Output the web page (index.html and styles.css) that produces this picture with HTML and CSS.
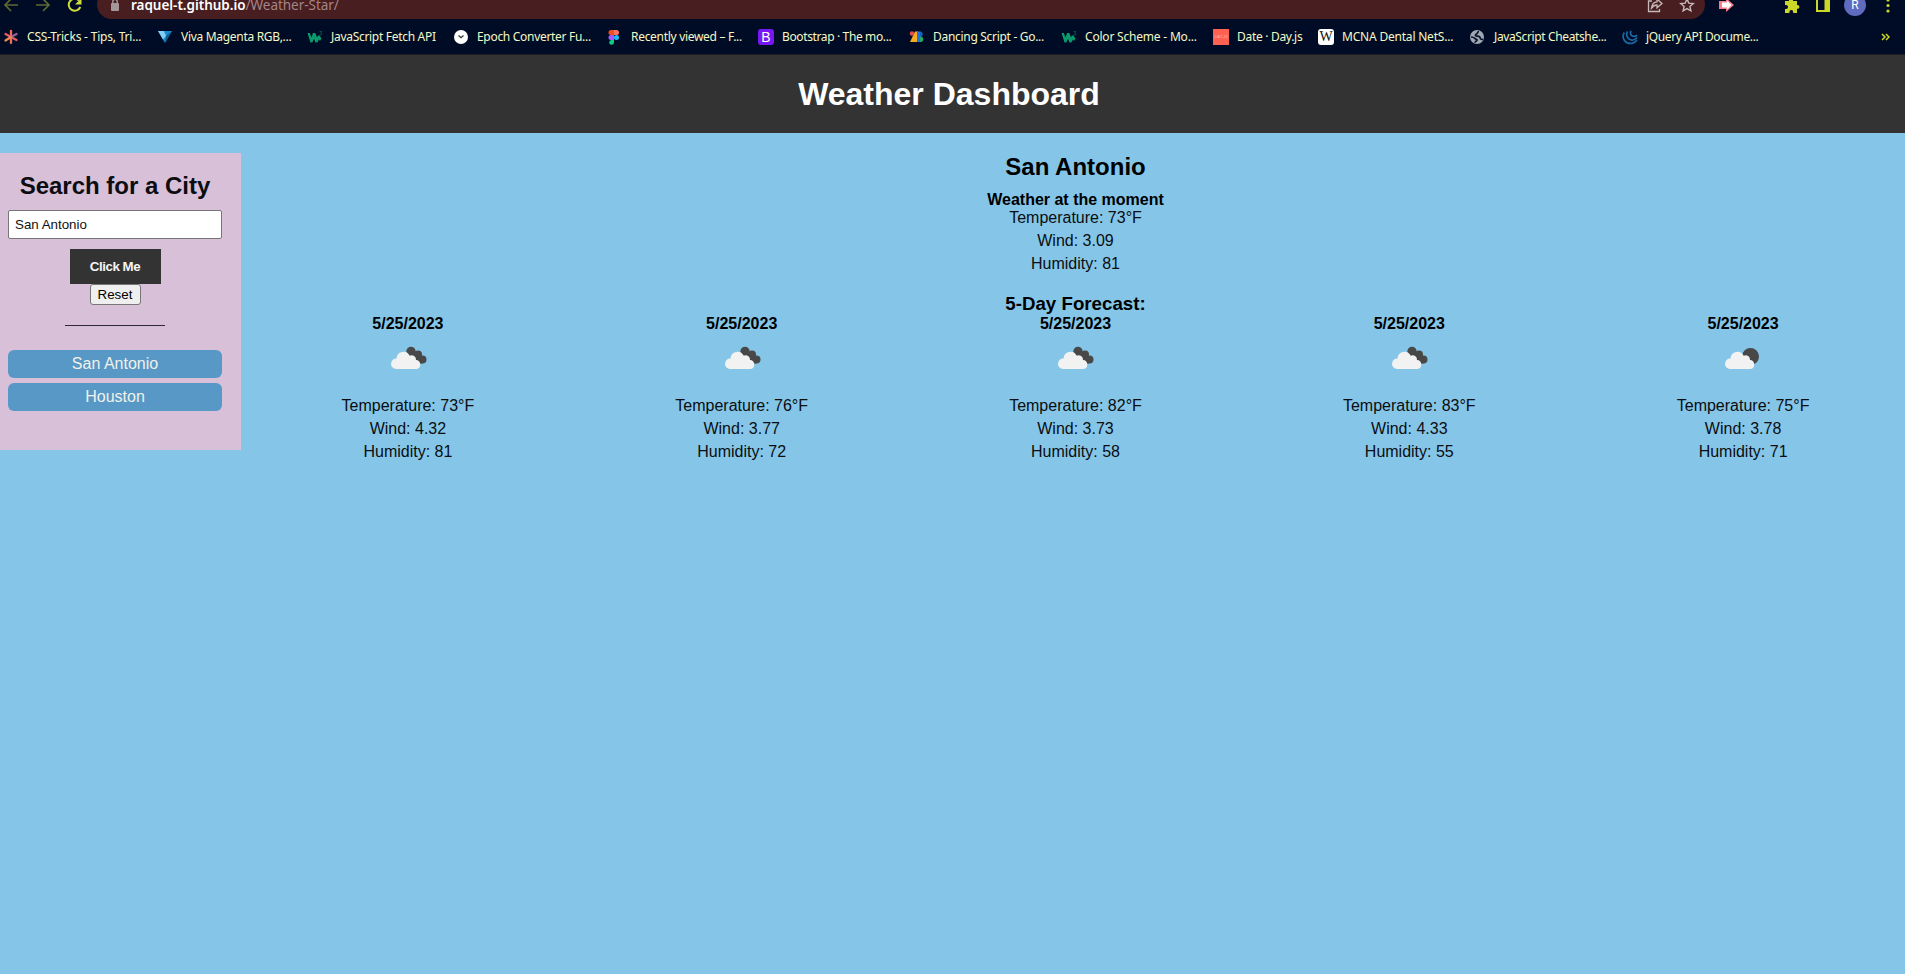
FILE: index.html
```html
<!DOCTYPE html>
<html lang="en">
<head>
<meta charset="utf-8">
<title>Weather Dashboard</title>
<link rel="stylesheet" href="styles.css">
</head>
<body>
<svg class="defs" width="0" height="0">
  <symbol id="w3" viewBox="0 0 16 16"><path d="M.5 4h2.300l1.700 4.500L6 4h2.300l1.700 4.500L11 6.500h1.500l2 3-1.500 2.500-1-1.500-1.700 3H8.500L7 9.800 5.300 13.500H3.500z" fill="#0b9a6d"/><path d="M12.500 2.500h2.300l-1.200 1.500q1.600.2 1.200 1.500-.5.800-2.300.3" fill="none" stroke="#07584a" stroke-width=".9"/></symbol>
  <symbol id="broken" viewBox="0 0 50 50"><g fill="#484848"><circle cx="28" cy="18.300" r="4.600"/><circle cx="35" cy="21.500" r="4"/><circle cx="39.500" cy="26.500" r="4"/><path d="M26 19l9 2 4.500 9.400H34z"/></g><use href="#cloud"/></symbol>
  <symbol id="moon" viewBox="0 0 50 50"><circle cx="32.500" cy="23.500" r="8.500" fill="#484848"/><use href="#cloud" x="-1"/></symbol>
  <symbol id="cloud" viewBox="0 0 50 50"><path d="M13 36a5.200 5.200 0 0 1 .6-10.500 6.800 6.800 0 0 1 13-2.700 4.300 4.300 0 0 1 6.400 4.300 4.500 4.500 0 0 1 .6 8.900z" fill="#f2f2f2"/></symbol>
</svg>

<div class="browser">
  <div class="toolbar">
    <svg class="tool back" viewBox="0 0 16 16" width="16" height="16"><path d="M15 8H2M8 2L2 8l6 6" fill="none" stroke="#5d6931" stroke-width="1.700"/></svg>
    <svg class="tool forward" viewBox="0 0 16 16" width="16" height="16"><path d="M1 8h13M8 2l6 6-6 6" fill="none" stroke="#5d6931" stroke-width="1.700"/></svg>
    <svg class="tool reload" viewBox="0 0 16 16" width="16" height="16"><path d="M13.300 10A6 6 0 1 1 12 3.500" fill="none" stroke="#d0de3a" stroke-width="2"/><path d="M14.500 1v6.500H8z" fill="#d0de3a"/></svg>
    <div class="address">
      <svg viewBox="0 0 10 14" width="10" height="14"><rect x="1" y="5" width="8" height="8" rx="1" fill="#a5989b"/><path d="M2.800 5V3.500a2.200 2.200 0 0 1 4.400 0V5" fill="none" stroke="#a5989b" stroke-width="1.400"/></svg>
      <span class="url"><b>raquel-t.github.io</b>/Weather-Star/</span>
      <svg class="share" viewBox="0 0 16 16" width="16" height="16"><path d="M5 4H1.500v10.500h11V12M4.500 11c.5-4 2.500-6 5.500-6.200V2l5 4.500-5 4.300V8c-2.300 0-4 1-5.500 3z" fill="none" stroke="#c5b9ba" stroke-width="1.300"/></svg>
      <svg class="star" viewBox="0 0 16 16" width="16" height="16"><path d="M8 2l1.800 4.100 4.500.4-3.400 3 1 4.400L8 11.600l-3.900 2.300 1-4.400-3.400-3 4.500-.4z" fill="none" stroke="#c5b9ba" stroke-width="1.400"/></svg>
    </div>
    <svg class="arrow" viewBox="0 0 17 16" width="17" height="16"><path d="M1 4h7V1l8 7-8 7v-3H1z" fill="#f17e88"/><path d="M4 5.500h5V3.500L13.500 8 9 12.500v-2H4z" fill="#fff"/></svg>
    <svg class="puzzle" viewBox="0 0 16 16" width="16" height="16"><path d="M1 4h4V3a2 2 0 0 1 4 0v1h4v4h.5a1.900 1.900 0 0 1 0 3.800H13V16H9.200v-1a1.900 1.900 0 0 0-3.800 0v1H1v-4h1a2 2 0 0 0 0-4H1z" fill="#cbd829"/></svg>
    <svg class="panel" viewBox="0 0 14 14" width="14" height="14"><path d="M1 1h12v12H1z" fill="none" stroke="#cbd829" stroke-width="2"/><path d="M8.500 0H14v14H8.500z" fill="#cbd829"/></svg>
    <span class="avatar">R</span>
    <svg class="dots" viewBox="0 0 4 16" width="4" height="16"><g fill="#cbd829"><circle cx="2" cy="3" r="1.600"/><circle cx="2" cy="8.500" r="1.600"/><circle cx="2" cy="14" r="1.600"/></g></svg>
  </div>
  <div class="bookmarks">
    <div class="bookmark wide"><svg viewBox="0 0 16 16"><g stroke-width="2.300" stroke-linecap="round"><path d="M8 2v12" stroke="#ef6b54"/><path d="M2.500 5l11 6" stroke="#e65b65"/><path d="M13.500 5L8 8" stroke="#8c6596"/><path d="M8 8l-5.500 3.500" stroke="#ee8a50"/></g></svg><span>CSS-Tricks - Tips, Tri...</span></div>
    <div class="bookmark"><svg viewBox="0 0 16 16"><path d="M1 2h14L8 14z" fill="#168bd0"/><path d="M1 2h6l2 5-3 3.500z" fill="#7fd0f4"/><path d="M15 2L8 14l1-7z" fill="#155b90"/></svg><span>Viva Magenta RGB,...</span></div>
    <div class="bookmark"><svg><use href="#w3"/></svg><span>JavaScript Fetch API</span></div>
    <div class="bookmark"><svg viewBox="0 0 16 16"><circle cx="8" cy="8" r="7" fill="#fff"/><path d="M5.500 6.500L8 8.700l2.500-2.200" fill="none" stroke="#333" stroke-width="1.300"/></svg><span>Epoch Converter Fu...</span></div>
    <div class="bookmark"><svg viewBox="0 0 16 16"><g transform="translate(-1)"><path d="M7 1H5a2.500 2.500 0 0 0 0 5h3V1z" fill="#f24e1e"/><path d="M8 1h2.500a2.500 2.500 0 0 1 0 5H8z" fill="#ff7262"/><path d="M8 6H5a2.400 2.400 0 0 0 0 5h3z" fill="#a259ff"/><circle cx="10.500" cy="8.500" r="2.500" fill="#1abcfe"/><path d="M8 11H5.500A2.400 2.400 0 1 0 8 13.500z" fill="#0acf83"/></g></svg><span>Recently viewed – F...</span></div>
    <div class="bookmark tight"><span class="tile bootstrap">B</span><span>Bootstrap · The mo...</span></div>
    <div class="bookmark"><svg viewBox="0 0 16 16"><path d="M6 2.500h3V13H1z" fill="#f9ab20"/><circle cx="3" cy="4.500" r="2.300" fill="#e34b45"/><path d="M8 2.500h3.500V13H8z" fill="#1972e8"/><path d="M11 2.500a2.700 2.700 0 0 1 0 5.400z" fill="#1760c0"/><path d="M11 7.500a2.700 2.700 0 0 1 1 5.500h-1z" fill="#2aa665"/></svg><span>Dancing Script - Go...</span></div>
    <div class="bookmark wide"><svg><use href="#w3"/></svg><span>Color Scheme - Mo...</span></div>
    <div class="bookmark"><span class="tile dayjs">DAY.JS</span><span>Date · Day.js</span></div>
    <div class="bookmark wide"><span class="tile wiki">W</span><span>MCNA Dental NetS...</span></div>
    <div class="bookmark tight"><svg viewBox="0 0 16 16"><circle cx="7" cy="8" r="7" fill="#a2a7b5"/><path d="M9 2.500C7 2.500 8 4.700 6.500 5S5 7 7 7.200s3.200.3 3.200 1.800S12 10.500 13 10.200M1 8c2 0 3 .2 4 1.500s2.300.5 2 1.700-2 1-2 2.500" fill="none" stroke="#07122b" stroke-width="1.700"/></svg><span>JavaScript Cheatshe...</span></div>
    <div class="bookmark tight"><svg viewBox="0 0 16 16"><path d="M2.300 3.500C-1 9 3.500 15.500 10 14.300q3-.6 5-3.300M5.500 2.500C3 7 7 12 11 11q2.500-.5 4-2.500M9 1.800c-1.500 3 .5 5.700 3 5.600 1.600 0 2.500-.8 3-1.500" fill="none" stroke="#1769a5" stroke-width="1.700"/></svg><span>jQuery API Docume...</span></div>
    <svg class="more" viewBox="0 0 9 8" width="9" height="8"><path d="M1 1l3 3-3 3M5 1l3 3-3 3" fill="none" stroke="#cbd829" stroke-width="1.500"/></svg>
  </div>
</div>

<header class="header"><h1>Weather Dashboard</h1></header>

<div class="layout">
  <aside class="sidebar">
    <h2>Search for a City</h2>
    <input class="city" type="text" value="San Antonio">
    <button class="search">Click Me</button>
    <button class="reset">Reset</button>
    <hr>
    <button class="history">San Antonio</button>
    <button class="history">Houston</button>
  </aside>
  <main class="weather">
    <h2>San Antonio</h2>
    <h4 class="moment">Weather at the moment</h4>
    <p>Temperature: 73°F</p><p>Wind: 3.09</p><p>Humidity: 81</p>
    <h3>5-Day Forecast:</h3>
    <div class="forecast">
      <section><h4>5/25/2023</h4><svg><use href="#broken"/></svg><p>Temperature: 73°F</p><p>Wind: 4.32</p><p>Humidity: 81</p></section>
      <section><h4>5/25/2023</h4><svg><use href="#broken"/></svg><p>Temperature: 76°F</p><p>Wind: 3.77</p><p>Humidity: 72</p></section>
      <section><h4>5/25/2023</h4><svg><use href="#broken"/></svg><p>Temperature: 82°F</p><p>Wind: 3.73</p><p>Humidity: 58</p></section>
      <section><h4>5/25/2023</h4><svg><use href="#broken"/></svg><p>Temperature: 83°F</p><p>Wind: 4.33</p><p>Humidity: 55</p></section>
      <section><h4>5/25/2023</h4><svg><use href="#moon"/></svg><p>Temperature: 75°F</p><p>Wind: 3.78</p><p>Humidity: 71</p></section>
    </div>
  </main>
</div>
</body>
</html>
```
FILE: styles.css
```css
* { box-sizing: border-box; }
body {
  margin: 0;
  height: 974px;
  overflow: hidden;
  background: #85c6e8;
  color: #0b0d10;
  font-family: "Liberation Sans", Arial, sans-serif;
  font-size: 16px;
}
h1, h2, h3, h4, p { margin: 0; }
.defs { display: block; height: 0; }

.browser {
  height: 55px;
  overflow: hidden;
  background: #000c25;
  border-bottom: 1px solid #211c20;
  font-family: "Noto Sans", "Open Sans", sans-serif;
}
.toolbar {
  display: flex;
  align-items: center;
  height: 29px;
  margin-top: -10px;
  padding-left: 3px;
}
.tool { margin-right: 16px; flex: none; }
.reload { margin-right: 14px; }
.address {
  display: flex;
  align-items: center;
  width: 1608px;
  height: 29px;
  flex: none;
  padding: 0 10px 0 13px;
  border-radius: 15px;
  background: #481e20;
}
.url {
  margin-left: 11px;
  margin-right: auto;
  color: #a58587;
  font-size: 13.500px;
  line-height: 18px;
  letter-spacing: -0.03px;
  white-space: nowrap;
}
.url b { color: #fff; font-weight: 600; }
.share { margin-right: 16px; }
.arrow { margin-left: 13px; }
.puzzle { margin-left: 49px; }
.panel { margin-left: 16px; }
.avatar {
  width: 22px;
  height: 22px;
  margin-left: 14px;
  border-radius: 50%;
  background: #5e6bbf;
  color: #fff;
  font: 12px/22px Roboto, sans-serif;
  text-align: center;
}
.dots { margin-left: 20px; }

.bookmarks {
  display: grid;
  grid-template-columns: 154px 150px 146px 154px 151px 151px 152px 152px 105px 152px 152px 259px 9px;
  align-items: center;
  height: 35px;
  padding-left: 3px;
}
.bookmark {
  display: flex;
  align-items: center;
  gap: 8px;
  color: #f4f9c5;
  font-size: 12px;
  line-height: 16px;
  letter-spacing: -0.3px;
  white-space: nowrap;
}
.wide { letter-spacing: -0.2px; }
.tight { letter-spacing: -0.37px; }
.bookmark svg { width: 16px; height: 16px; flex: none; }
.tile { width: 16px; height: 16px; text-align: center; letter-spacing: 0; overflow: hidden; }
.bootstrap { border-radius: 3px; background: #7817f5; color: #fff; font: 14px/16px "Liberation Sans", sans-serif; }
.dayjs { background: #ff6052; color: #ffb1a5; font: 4px/16px "Liberation Sans", sans-serif; }
.wiki { border-radius: 3px; background: #fff; color: #111; font: 14px/16px "Liberation Serif", serif; }

.header {
  height: 78px;
  padding: 21px 7px 0 0;
  background: #333;
  color: #fff;
  text-align: center;
}
.header h1 { font-size: 32px; line-height: 37px; }

.layout { display: flex; align-items: flex-start; padding-top: 20px; }
.sidebar {
  display: flex;
  flex-direction: column;
  align-items: center;
  width: 241px;
  height: 297px;
  flex: none;
  padding: 19px 19px 0 8px;
  background: #d7c0d8;
}
.sidebar h2 { font-size: 24px; line-height: 28px; white-space: nowrap; }
.city {
  width: 214px;
  height: 29px;
  margin: 10px 0;
  padding: 0 6px;
  border: 1px solid #767676;
  border-radius: 2px;
  background: #fff;
  color: #111;
  font: 13.333px "Liberation Sans", sans-serif;
}
.search {
  width: 91px;
  height: 35px;
  padding: 0;
  border: 0;
  background: #333;
  color: #f5f5f5;
  font: bold 13.333px "Liberation Sans", sans-serif;
  letter-spacing: -0.45px;
}
.reset {
  width: 51px;
  height: 21px;
  padding: 0;
  border: 1px solid #767676;
  border-radius: 3px;
  background: #efefef;
  color: #000;
  font: 13.333px "Liberation Sans", sans-serif;
}
.sidebar hr { width: 100px; height: 1px; margin: 20px 0 24px; border: 0; background: #30283a; }
.history {
  width: 214px;
  height: 28px;
  flex: none;
  margin-bottom: 5px;
  padding: 0;
  border: 0;
  border-radius: 6px;
  background: #5798c7;
  color: #f1f1ea;
  font: 16px "Liberation Sans", sans-serif;
}

.weather { width: 1669px; flex: none; text-align: center; }
.weather h2 { height: 38px; font-size: 24px; line-height: 28px; color: #000; }
.weather h3 { margin-top: 15px; font-size: 18.720px; line-height: 21px; padding-bottom: 1px; color: #000; }
.weather h4 { font-size: 16px; line-height: 18px; color: #000; }
.weather p { height: 23px; line-height: 18px; }
.forecast { display: grid; grid-template-columns: repeat(5, 1fr); }
.forecast svg { display: block; width: 50px; height: 50px; margin: 0 auto 14px; }
```
